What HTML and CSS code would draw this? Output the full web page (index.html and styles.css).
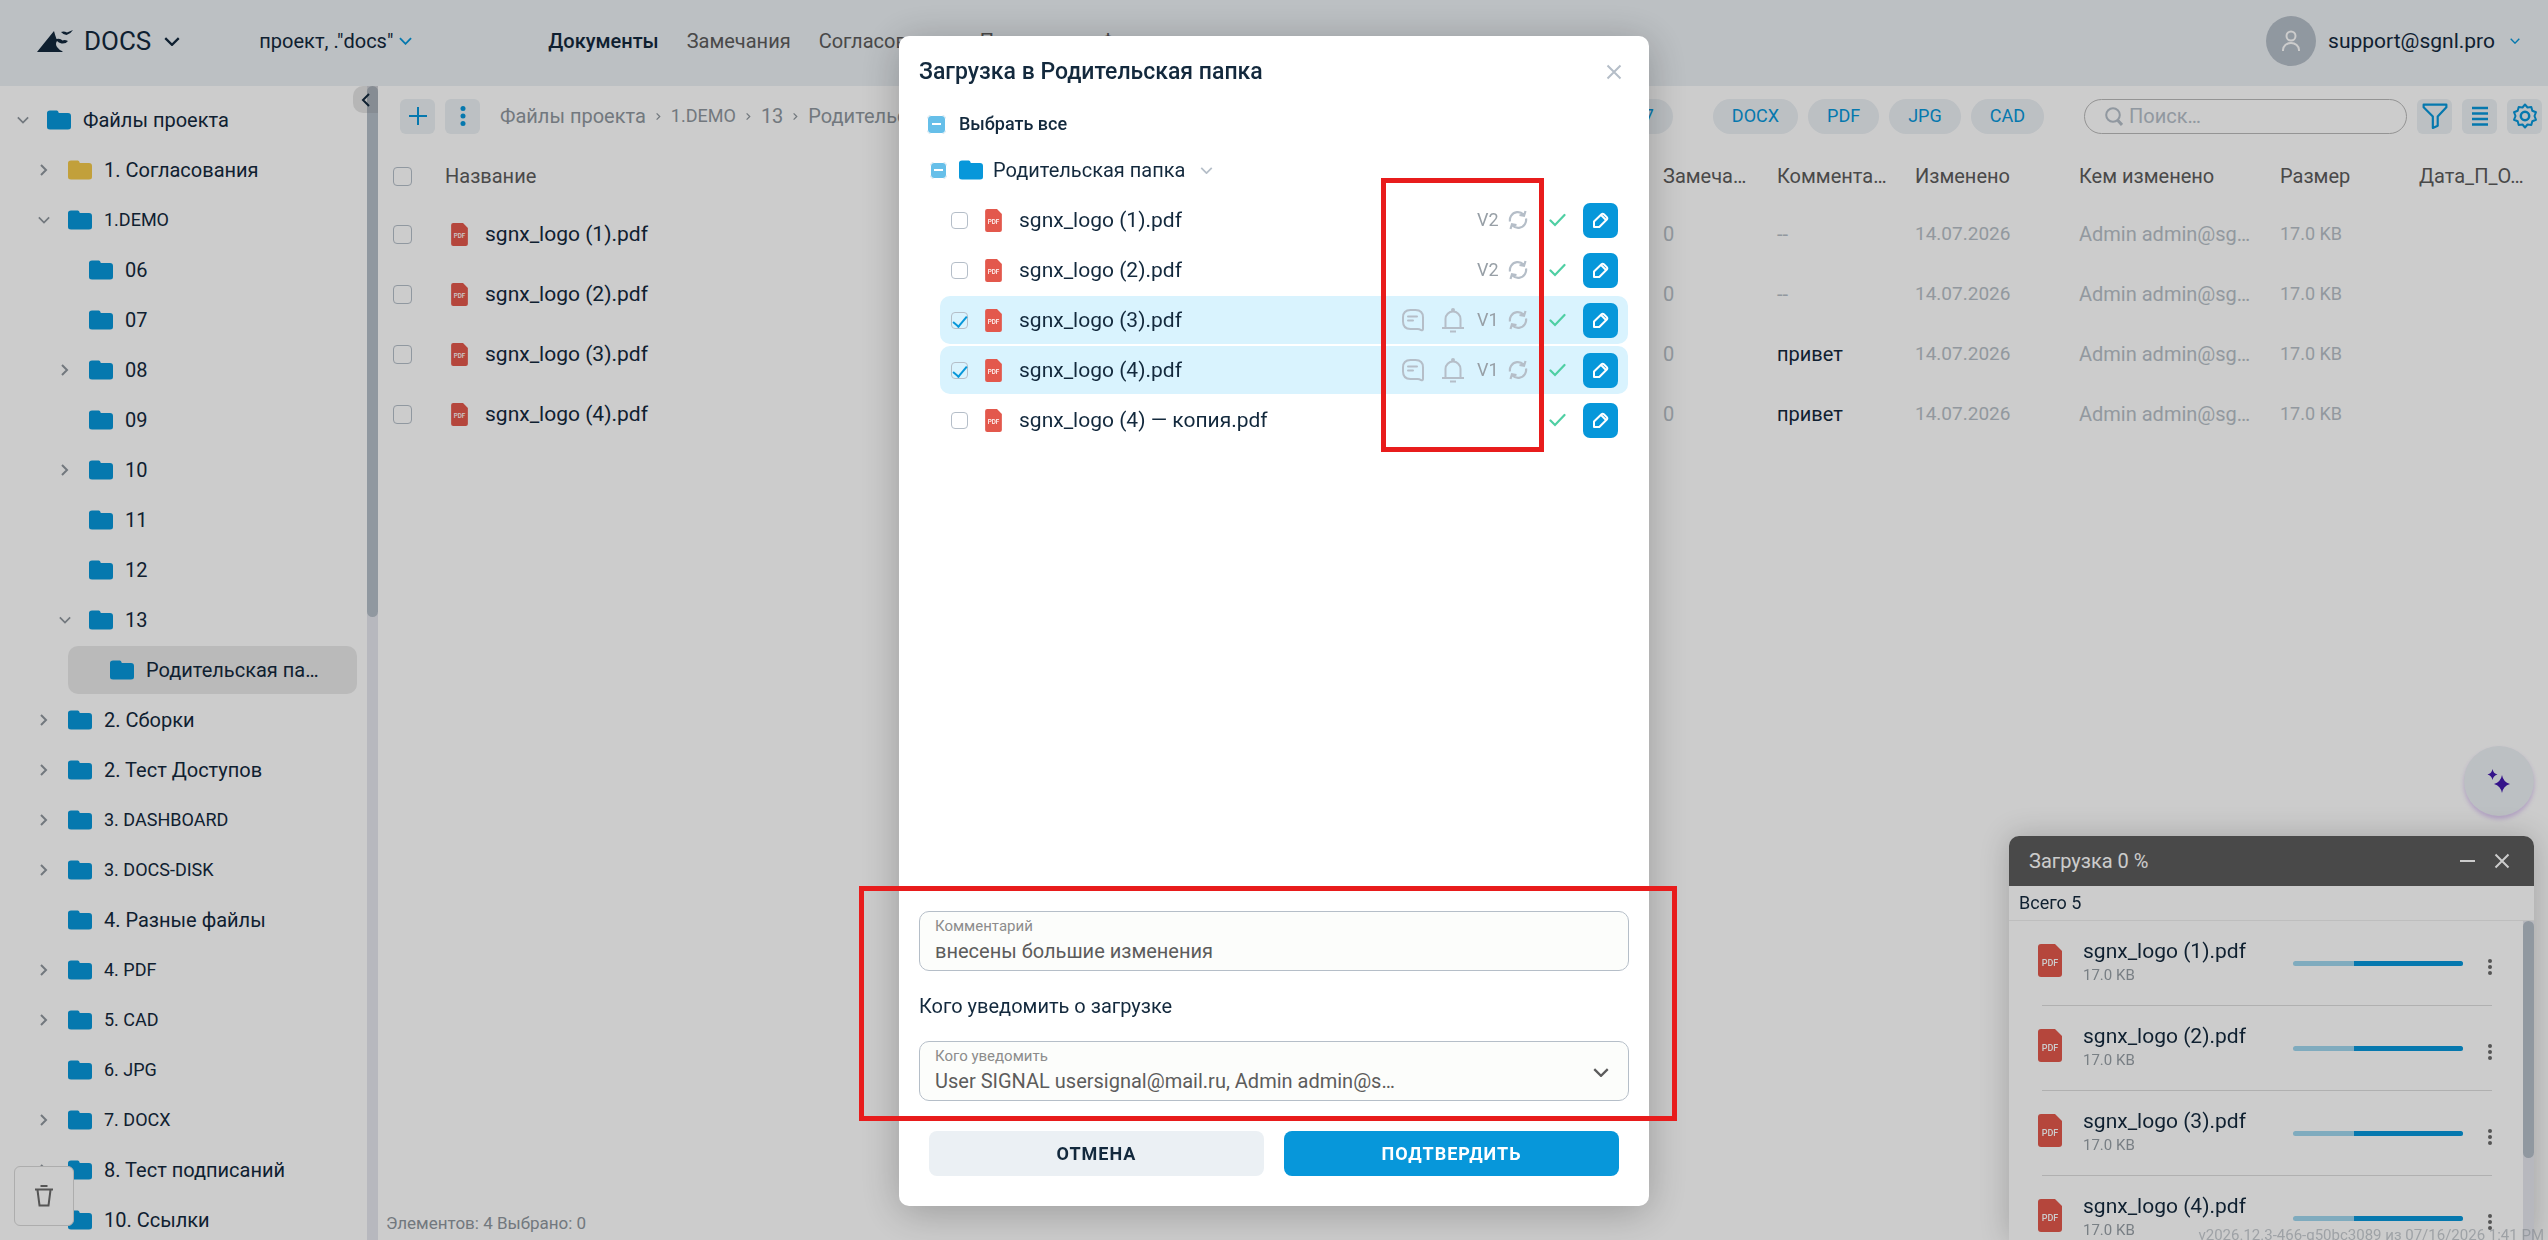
FILE: index.html
```html
<!DOCTYPE html>
<html lang="ru">
<head>
<meta charset="utf-8">
<title>DOCS</title>
<link rel="stylesheet" href="styles.css">
</head>
<body>
<svg class="sprite" aria-hidden="true">
  <symbol id="down" viewBox="0 0 14 8"><path d="M1 1l6 6 6-6" fill="none" stroke="currentColor" stroke-width="2"/></symbol>
  <symbol id="right" viewBox="0 0 8 14"><path d="M1 2l5 5-5 5" fill="none" stroke="currentColor" stroke-width="2"/></symbol>
  <symbol id="folder" viewBox="0 0 24 20"><path d="M3 .5h7q1.200 0 1.800 2.500H21q3 0 3 3V17q0 2.500-3 2.500H3q-3 0-3-2.500V3Q0 .5 3 .5z" fill="currentColor"/></symbol>
  <symbol id="pdf" viewBox="0 0 24 33"><path d="M3 0h14l7 7v23q0 3-3 3H3q-3 0-3-3V3q0-3 3-3z" fill="#e3584c"/><text x="12" y="22" text-anchor="middle" class="pdf-text">PDF</text></symbol>
  <symbol id="dots" viewBox="0 0 6 20"><circle cx="3" cy="2.500" r="2.500"/><circle cx="3" cy="10" r="2.500"/><circle cx="3" cy="17.500" r="2.500"/></symbol>
  <symbol id="close" viewBox="0 0 16 16"><path d="M1.500 1.500l13 13m0-13l-13 13" fill="none" stroke="currentColor" stroke-width="2"/></symbol>
  <symbol id="note" viewBox="0 0 24 24"><path d="M9.500 2h5Q22 2 22 9.500V21q0 1.800-2 1l-1.500-.7q-.8-.3-2-.3h-7Q2 21 2 13.500v-4Q2 2 9.500 2z" fill="none" stroke="currentColor" stroke-width="2"/><path d="M7 8.500h9M7 12.500h5" stroke="currentColor" stroke-width="2" stroke-linecap="round"/></symbol>
  <symbol id="bell" viewBox="0 0 24 26"><path d="M1 21h22M4.500 21v-9a7.500 7.500 0 0 1 15 0v9M9 24.500h6" fill="none" stroke="currentColor" stroke-width="2"/><circle cx="12" cy="3" r="2" fill="currentColor"/></symbol>
  <symbol id="sync" viewBox="0 0 20 20"><path d="M2 11.500a8 8 0 0 1 1-5.500 8 8 0 0 1 12.500-1.500M18 8.500a8 8 0 0 1-1 5.500 8 8 0 0 1-12.500 1.500M17.500 1l-1.500 4.800-4.500-.8M2.500 19L4 14.200l4.500.8" fill="none" stroke="currentColor" stroke-width="2.200"/></symbol>
  <symbol id="ok" viewBox="0 0 17 14"><path d="M1.500 7.500l4.500 4.500L15.500 2" fill="none" stroke="currentColor" stroke-width="2.200" stroke-linecap="round"/></symbol>
  <symbol id="pen" viewBox="0 0 17 17"><path d="M2 15V9.500L9.500 2.200q1.200-1 2.400 0l2.900 2.900q1 1.200 0 2.400L7.300 15zM9 3l5 5" fill="none" stroke="currentColor" stroke-width="2" stroke-linejoin="round"/></symbol>
</svg>

<div class="app">
  <header class="top">
    <button class="brand"><svg class="logo" viewBox="0 0 36 22"><path d="M0 22Q8 12 17 1q1 4 2.500 8 4-1 6 1.500 2-1 5.500.5-2 3-6.500 2.500-3-1-4.500-2.500-2 3 0 6t6 4.500q-1.500.5-2.500.5zM24 2q3-1 6 .5Q33 1 36 0q-2 3.500-6.500 5Q26 4.500 24 2z" fill="currentColor"/></svg><span class="brand-name">DOCS</span><svg class="chev16"><use href="#down"/></svg></button>
    <button class="project">проект, ."docs"<svg class="chev blue"><use href="#down"/></svg></button>
    <nav class="menu">
      <a href="#" class="current">Документы</a><a href="#">Замечания</a><a href="#">Согласования</a><a href="#">Проверки</a><a href="#">Формы</a>
    </nav>
    <button class="user"><span class="avatar"><svg viewBox="0 0 20 22"><circle cx="10" cy="6" r="4.500"/><path d="M2 21v-1a8 7 0 0 1 16 0v1"/></svg></span>support@sgnl.pro<svg class="chev10 blue"><use href="#down"/></svg></button>
  </header>

  <div class="body">
    <aside class="side">
      <ul class="tree">
        <li class="l0"><a href="#"><svg class="tw down"><use href="#down"/></svg><svg class="folder"><use href="#folder"/></svg>Файлы проекта</a></li>
        <li class="l1"><a href="#"><svg class="tw"><use href="#right"/></svg><svg class="folder yellow"><use href="#folder"/></svg>1. Согласования</a></li>
        <li class="l1"><a href="#"><svg class="tw down"><use href="#down"/></svg><svg class="folder"><use href="#folder"/></svg><span class="caps">1.DEMO</span></a></li>
        <li class="l2"><a href="#"><span class="tw"></span><svg class="folder"><use href="#folder"/></svg>06</a></li>
        <li class="l2"><a href="#"><span class="tw"></span><svg class="folder"><use href="#folder"/></svg>07</a></li>
        <li class="l2"><a href="#"><svg class="tw"><use href="#right"/></svg><svg class="folder"><use href="#folder"/></svg>08</a></li>
        <li class="l2"><a href="#"><span class="tw"></span><svg class="folder"><use href="#folder"/></svg>09</a></li>
        <li class="l2"><a href="#"><svg class="tw"><use href="#right"/></svg><svg class="folder"><use href="#folder"/></svg>10</a></li>
        <li class="l2"><a href="#"><span class="tw"></span><svg class="folder"><use href="#folder"/></svg>11</a></li>
        <li class="l2"><a href="#"><span class="tw"></span><svg class="folder"><use href="#folder"/></svg>12</a></li>
        <li class="l2"><a href="#"><svg class="tw down"><use href="#down"/></svg><svg class="folder"><use href="#folder"/></svg>13</a></li>
        <li class="l3"><a href="#" class="selected"><span class="tw"></span><svg class="folder"><use href="#folder"/></svg>Родительская па…</a></li>
        <li class="l1"><a href="#"><svg class="tw"><use href="#right"/></svg><svg class="folder"><use href="#folder"/></svg>2. Сборки</a></li>
        <li class="l1"><a href="#"><svg class="tw"><use href="#right"/></svg><svg class="folder"><use href="#folder"/></svg>2. Тест Доступов</a></li>
        <li class="l1"><a href="#"><svg class="tw"><use href="#right"/></svg><svg class="folder"><use href="#folder"/></svg><span class="caps">3. DASHBOARD</span></a></li>
        <li class="l1"><a href="#"><svg class="tw"><use href="#right"/></svg><svg class="folder"><use href="#folder"/></svg><span class="caps">3. DOCS-DISK</span></a></li>
        <li class="l1"><a href="#"><span class="tw"></span><svg class="folder"><use href="#folder"/></svg>4. Разные файлы</a></li>
        <li class="l1"><a href="#"><svg class="tw"><use href="#right"/></svg><svg class="folder"><use href="#folder"/></svg><span class="caps">4. PDF</span></a></li>
        <li class="l1"><a href="#"><svg class="tw"><use href="#right"/></svg><svg class="folder"><use href="#folder"/></svg><span class="caps">5. CAD</span></a></li>
        <li class="l1"><a href="#"><span class="tw"></span><svg class="folder"><use href="#folder"/></svg><span class="caps">6. JPG</span></a></li>
        <li class="l1"><a href="#"><svg class="tw"><use href="#right"/></svg><svg class="folder"><use href="#folder"/></svg><span class="caps">7. DOCX</span></a></li>
        <li class="l1"><a href="#"><svg class="tw"><use href="#right"/></svg><svg class="folder"><use href="#folder"/></svg>8. Тест подписаний</a></li>
        <li class="l1"><a href="#"><svg class="tw"><use href="#right"/></svg><svg class="folder"><use href="#folder"/></svg>10. Ссылки</a></li>
      </ul>
      <div class="track"><div class="thumb"></div></div>
      <button class="collapse" aria-label="Свернуть"><svg viewBox="0 0 9 14"><path d="M8 1L2 7l6 6" fill="none" stroke="currentColor" stroke-width="2"/></svg></button>
      <button class="trash" aria-label="Корзина"><svg viewBox="0 0 20 22"><path d="M1 4.500h18M3.500 5l2 15.500h9l2-15.500M6.500 1h7" fill="none" stroke="currentColor" stroke-width="2"/></svg></button>
    </aside>

    <main class="main">
      <div class="tools">
        <button class="sq" aria-label="Добавить"><svg viewBox="0 0 18 18"><path d="M9 0v18M0 9h18" stroke="currentColor" stroke-width="2"/></svg></button>
        <button class="sq" aria-label="Меню"><svg><use href="#dots"/></svg></button>
        <nav class="crumbs"><a href="#">Файлы проекта</a><svg><use href="#right"/></svg><a href="#" class="caps">1.DEMO</a><svg><use href="#right"/></svg><a href="#">13</a><svg><use href="#right"/></svg><a href="#">Родительская папка</a></nav>
        <div class="chips"><button class="chip">2027</button></div>
        <div class="chips"><button class="chip">DOCX</button><button class="chip">PDF</button><button class="chip">JPG</button><button class="chip">CAD</button></div>
        <label class="search"><svg viewBox="0 0 18 19"><path d="M12.500 13l4.500 5" stroke-width="3"/><circle cx="8" cy="8" r="6.800"/></svg><input type="search" placeholder="Поиск…" aria-label="Поиск"></label>
        <div class="tool-set">
          <button class="sq" aria-label="Фильтр"><svg class="wide" viewBox="0 0 24 24"><path d="M1.500 1.500h21v2.500L14.500 12.500v8.500l-4.500 2V12.500L1.500 4z" fill="none" stroke="currentColor" stroke-width="2" stroke-linejoin="round"/></svg></button>
          <button class="sq" aria-label="Список"><svg viewBox="0 0 16 20"><path d="M0 2h16M0 7.500h16M0 13h16M0 18.500h16" stroke="currentColor" stroke-width="2.500"/></svg></button>
          <button class="sq" aria-label="Настройки"><svg class="wide" viewBox="0 0 26 26"><path d="M13 1.500l2.500 3 3.800-.6 1 3.800 3.700 1.500L22.500 13l1.500 3.800-3.700 1.500-1 3.800-3.800-.6-2.500 3-2.500-3-3.800.6-1-3.800L2 16.800 3.500 13 2 9.200l3.700-1.500 1-3.800 3.800.6z" fill="none" stroke="currentColor" stroke-width="2" stroke-linejoin="round"/><circle cx="13" cy="13" r="4.200" fill="none" stroke="currentColor" stroke-width="2.500"/></svg></button>
        </div>
      </div>
      <table class="files">
        <colgroup><col class="c0"><col><col class="c2"><col class="c3"><col class="c4"><col class="c5"><col class="c6"><col class="c7"></colgroup>
        <thead><tr><th><input type="checkbox" class="box" aria-label="Все"></th><th>Название</th><th>Замеча…</th><th>Коммента…</th><th>Изменено</th><th>Кем изменено</th><th>Размер</th><th>Дата_П_О…</th></tr></thead>
        <tbody>
          <tr><td><input type="checkbox" class="box" aria-label="Файл 1"></td><td><span class="file"><svg class="pdf"><use href="#pdf"/></svg>sgnx_logo (1).pdf</span></td><td>0</td><td>--</td><td class="date">14.07.2026</td><td>Admin admin@sg…</td><td class="caps">17.0 KB</td><td></td></tr>
          <tr><td><input type="checkbox" class="box" aria-label="Файл 2"></td><td><span class="file"><svg class="pdf"><use href="#pdf"/></svg>sgnx_logo (2).pdf</span></td><td>0</td><td>--</td><td class="date">14.07.2026</td><td>Admin admin@sg…</td><td class="caps">17.0 KB</td><td></td></tr>
          <tr><td><input type="checkbox" class="box" aria-label="Файл 3"></td><td><span class="file"><svg class="pdf"><use href="#pdf"/></svg>sgnx_logo (3).pdf</span></td><td>0</td><td class="ink">привет</td><td class="date">14.07.2026</td><td>Admin admin@sg…</td><td class="caps">17.0 KB</td><td></td></tr>
          <tr><td><input type="checkbox" class="box" aria-label="Файл 4"></td><td><span class="file"><svg class="pdf"><use href="#pdf"/></svg>sgnx_logo (4).pdf</span></td><td>0</td><td class="ink">привет</td><td class="date">14.07.2026</td><td>Admin admin@sg…</td><td class="caps">17.0 KB</td><td></td></tr>
        </tbody>
      </table>
      <p class="status">Элементов: 4 Выбрано: 0</p>
    </main>
  </div>
</div>

<button class="assist" aria-label="Помощник"><svg viewBox="0 0 22 24"><path d="M14 6q1.200 7 8 9-6.800 2-8 9-1.200-7-8-9 6.800-2 8-9zM4.500 0Q5.300 4.500 9.500 5.500 5.300 6.500 4.500 11 3.700 6.500-.5 5.500 3.700 4.500 4.500 0z" fill="#4218ad"/></svg></button>

<section class="upload">
  <header class="upload-head"><h2>Загрузка 0 %</h2><button aria-label="Свернуть"><svg viewBox="0 0 16 16"><path d="M1 8h15" stroke="currentColor" stroke-width="2"/></svg></button><button aria-label="Закрыть"><svg><use href="#close"/></svg></button></header>
  <p class="total">Всего 5</p>
  <div class="upload-body">
    <ul>
      <li><svg class="pdf-big"><use href="#pdf"/></svg><div class="up-name">sgnx_logo (1).pdf<small>17.0 KB</small></div><div class="bar"><i></i></div><button aria-label="Ещё"><svg><use href="#dots"/></svg></button></li>
      <li><svg class="pdf-big"><use href="#pdf"/></svg><div class="up-name">sgnx_logo (2).pdf<small>17.0 KB</small></div><div class="bar"><i></i></div><button aria-label="Ещё"><svg><use href="#dots"/></svg></button></li>
      <li><svg class="pdf-big"><use href="#pdf"/></svg><div class="up-name">sgnx_logo (3).pdf<small>17.0 KB</small></div><div class="bar"><i></i></div><button aria-label="Ещё"><svg><use href="#dots"/></svg></button></li>
      <li><svg class="pdf-big"><use href="#pdf"/></svg><div class="up-name">sgnx_logo (4).pdf<small>17.0 KB</small></div><div class="bar"><i></i></div><button aria-label="Ещё"><svg><use href="#dots"/></svg></button></li>
    </ul>
    <div class="up-track"><div class="up-thumb"></div></div>
  </div>
</section>
<p class="version">v2026.12.3-466-g50bc3089 из 07/16/2026 1:41 PM</p>

<div class="backdrop">
  <div class="modal" role="dialog" aria-labelledby="modal-title">
    <header class="modal-head"><h1 id="modal-title">Загрузка в Родительская папка</h1><button aria-label="Закрыть"><svg><use href="#close"/></svg></button></header>
    <label class="all"><input type="checkbox" class="box partial">Выбрать все</label>
    <div class="group">
      <label><input type="checkbox" class="box small partial"><svg class="folder"><use href="#folder"/></svg>Родительская папка</label>
      <svg class="chev13"><use href="#down"/></svg>
    </div>
    <div class="picks">
      <div class="pick"><label><input type="checkbox" class="box small"><svg class="pdf"><use href="#pdf"/></svg>sgnx_logo (1).pdf</label><span class="ver">V2</span><svg class="sync"><use href="#sync"/></svg><svg class="ok"><use href="#ok"/></svg><button aria-label="Изменить"><svg><use href="#pen"/></svg></button></div>
      <div class="pick"><label><input type="checkbox" class="box small"><svg class="pdf"><use href="#pdf"/></svg>sgnx_logo (2).pdf</label><span class="ver">V2</span><svg class="sync"><use href="#sync"/></svg><svg class="ok"><use href="#ok"/></svg><button aria-label="Изменить"><svg><use href="#pen"/></svg></button></div>
      <div class="pick on"><label><input type="checkbox" class="box small" checked><svg class="pdf"><use href="#pdf"/></svg>sgnx_logo (3).pdf</label><svg class="note"><use href="#note"/></svg><svg class="bell"><use href="#bell"/></svg><span class="ver">V1</span><svg class="sync"><use href="#sync"/></svg><svg class="ok"><use href="#ok"/></svg><button aria-label="Изменить"><svg><use href="#pen"/></svg></button></div>
      <div class="pick on"><label><input type="checkbox" class="box small" checked><svg class="pdf"><use href="#pdf"/></svg>sgnx_logo (4).pdf</label><svg class="note"><use href="#note"/></svg><svg class="bell"><use href="#bell"/></svg><span class="ver">V1</span><svg class="sync"><use href="#sync"/></svg><svg class="ok"><use href="#ok"/></svg><button aria-label="Изменить"><svg><use href="#pen"/></svg></button></div>
      <div class="pick"><label><input type="checkbox" class="box small"><svg class="pdf"><use href="#pdf"/></svg>sgnx_logo (4) — копия.pdf</label><svg class="ok"><use href="#ok"/></svg><button aria-label="Изменить"><svg><use href="#pen"/></svg></button></div>
      <div class="mark mark-list"></div>
    </div>
    <div class="form">
      <div class="field"><label for="comment">Комментарий</label><input id="comment" type="text" value="внесены большие изменения"></div>
      <h2>Кого уведомить о загрузке</h2>
      <div class="field"><label for="notify">Кого уведомить</label><select id="notify"><option>User SIGNAL usersignal@mail.ru, Admin admin@s…</option></select><svg class="chev16"><use href="#down"/></svg></div>
      <div class="mark mark-form"></div>
    </div>
    <footer class="actions"><button class="cancel">ОТМЕНА</button><button class="confirm">ПОДТВЕРДИТЬ</button></footer>
  </div>
</div>
</body>
</html>
```
FILE: styles.css
```css
* { box-sizing: border-box; }
:root {
  --ink: #13293d;
  --blue: #0797da;
  --pale: #ebf0f4;
  --grey: #b5bec8;
}
body {
  margin: 0;
  height: 100vh;
  overflow: hidden;
  background: #fff;
  color: var(--ink);
  font: 20px/24px "Roboto", sans-serif;
}
h1, h2, p, ul { margin: 0; padding: 0; }
ul { list-style: none; }
a { color: inherit; text-decoration: none; }
button { margin: 0; padding: 0; border: 0; background: none; color: inherit; font: inherit; }
svg { display: block; flex: none; }
.sprite { position: absolute; width: 0; height: 0; }
.caps { font-size: 18px; }
.blue { color: var(--blue); }
.pdf-text { font: 500 9px "Roboto", sans-serif; fill: #fff; }
.folder { width: 24px; height: 20px; color: var(--blue); }
.yellow { color: #f3c94a; }
.pdf { width: 17px; height: 23px; }
.chev { width: 13px; height: 8px; }
.chev16 { width: 16px; height: 9px; }
.chev13 { width: 13px; height: 7px; color: var(--grey); }
.chev10 { width: 10px; height: 6px; margin-left: 3px; }

.box {
  appearance: none;
  flex: none;
  display: grid;
  place-items: center;
  width: 19px;
  height: 19px;
  margin: 0;
  border: 1px solid var(--grey);
  border-radius: 4px;
}
.box.small { width: 17px; height: 17px; }
.partial::after {
  content: "";
  width: 100%;
  height: 100%;
  border: 1px solid #fff;
  border-radius: 4px;
  background: linear-gradient(#fff, #fff) center / 9px 2px no-repeat #66bfe9;
}
.box:checked::after {
  content: "";
  width: 6px;
  height: 12px;
  margin-bottom: 5px;
  border: solid var(--blue);
  border-width: 0 2px 2px 0;
  transform: rotate(40deg);
}

.app { display: flex; flex-direction: column; height: 100%; }
.top {
  flex: none;
  display: flex;
  align-items: center;
  height: 86px;
  padding: 0 28px 4px 37px;
  background: var(--pale);
}
.brand { display: flex; align-items: center; color: var(--ink); }
.logo { width: 36px; height: 22px; }
.brand-name { margin: 0 13px 0 11px; font-size: 26px; line-height: 32px; }
.project { display: flex; align-items: center; gap: 6px; margin-left: 79px; }
.menu { flex: 1; display: flex; gap: 28px; margin-left: 136px; color: #5c5c5c; }
.menu .current { color: var(--ink); font-weight: 500; }
.user { display: flex; align-items: center; gap: 12px; font-size: 21px; }
.avatar { display: grid; place-items: center; width: 50px; height: 50px; border-radius: 50%; background: var(--grey); }
.avatar svg { width: 20px; height: 22px; fill: none; stroke: #fff; stroke-width: 2; }

.body { flex: 1; display: flex; min-height: 0; }
.side { position: relative; flex: none; display: flex; width: 378px; overflow: hidden; }
.tree { flex: 1; padding: 10px 10px 0 5px; }
.tree li { margin-bottom: 2px; }
.tree a { display: flex; align-items: center; height: 48px; border-radius: 10px; }
.tree .folder { margin: 0 12px 0 6px; }
.tree .selected { background: #e9e9e9; }
.tw { flex: none; width: 8px; height: 14px; margin: 0 14px; color: #8f979e; }
.tw.down { width: 12px; height: 8px; margin: 0 12px; }
.l1 { margin-left: 21px; }
.l2 { margin-left: 42px; }
.l3 { margin-left: 63px; }
.track { width: 11px; background: #e5e7ee; }
.thumb { height: 46%; border-radius: 6px; background: var(--grey); }
.collapse {
  position: absolute;
  top: 0;
  right: 0;
  width: 25px;
  height: 27px;
  padding-left: 8px;
  border-radius: 10px 0 0 10px;
  background: rgba(120, 120, 120, .2);
}
.collapse svg { width: 9px; height: 14px; }
.trash {
  position: absolute;
  left: 14px;
  bottom: 14px;
  display: grid;
  place-items: center;
  width: 60px;
  height: 60px;
  border: 1px solid #d9d9d9;
  border-radius: 6px;
  background: #fff;
  color: #6b6b6b;
}
.trash svg { width: 20px; height: 22px; }

.main { flex: 1; display: flex; flex-direction: column; min-width: 0; }
.tools { display: flex; align-items: center; gap: 10px; height: 60px; padding: 0 6px 0 22px; }
.sq { flex: none; display: grid; place-items: center; width: 35px; height: 35px; border-radius: 6px; background: var(--pale); color: var(--blue); }
.sq svg { width: 18px; height: 20px; fill: currentColor; }
.sq svg.wide { width: 26px; height: 26px; }
.crumbs { flex: 1; display: flex; align-items: center; gap: 10px; min-width: 0; margin-left: 10px; overflow: hidden; color: #8f979e; white-space: nowrap; }
.crumbs svg { width: 5px; height: 9px; }
.chips { display: flex; gap: 10px; margin-right: 30px; }
.chip { height: 35px; padding: 0 19px; border-radius: 18px; background: var(--pale); color: var(--blue); font-size: 18px; }
.search { display: flex; align-items: center; gap: 6px; width: 323px; height: 35px; padding: 0 20px; border: 1px solid #b9b9b9; border-radius: 18px; }
.search svg { width: 18px; height: 19px; fill: none; stroke: var(--grey); stroke-width: 2; }
.search input { flex: 1; min-width: 0; padding: 0; border: 0; outline: 0; background: none; font: inherit; }
.search input::placeholder { color: var(--grey); }
.tool-set { display: flex; gap: 10px; }
.files { width: 100%; table-layout: fixed; border-collapse: collapse; }
.files th { height: 58px; padding: 2px 0 0; color: #5c5c5c; font-weight: 400; text-align: left; white-space: nowrap; }
.files td { height: 60px; padding: 0; color: #b7bfc7; white-space: nowrap; }
.files .box { margin-left: 15px; }
.files .date { font-size: 19px; }
.files .ink, .file { color: var(--ink); }
.file { display: flex; align-items: center; gap: 17px; padding-left: 6px; font-size: 21px; }
.c0 { width: 67px; }
.c2 { width: 114px; }
.c3 { width: 138px; }
.c4 { width: 164px; }
.c5 { width: 201px; }
.c6 { width: 139px; }
.c7 { width: 129px; }
.status { margin-top: auto; padding: 0 8px 6px; color: #8f979e; font-size: 17px; line-height: 22px; }

.assist {
  position: fixed;
  right: 14px;
  bottom: 424px;
  display: grid;
  place-items: center;
  width: 70px;
  height: 70px;
  border-radius: 50%;
  background: var(--pale);
  box-shadow: 0 3px 4px rgba(150, 80, 220, .3);
}
.assist svg { width: 22px; height: 24px; overflow: visible; }
.upload {
  position: fixed;
  right: 14px;
  bottom: 0;
  display: flex;
  flex-direction: column;
  width: 525px;
  height: 404px;
  border-radius: 10px 10px 0 0;
  overflow: hidden;
  background: #fff;
  box-shadow: 0 0 30px rgba(0, 0, 0, .2);
}
.upload-head { flex: none; display: flex; align-items: center; gap: 19px; height: 50px; padding: 0 24px 0 20px; background: #5c5c5c; color: #fff; }
.upload-head h2 { flex: 1; font-size: 20px; font-weight: 400; }
.upload-head svg { width: 16px; height: 16px; }
.total { flex: none; height: 35px; padding: 5px 10px; border-bottom: 1px solid #eee; font-size: 18px; }
.upload-body { flex: 1; display: flex; min-height: 0; overflow: hidden; }
.upload-body ul { flex: 1; padding: 0 31px 0 33px; }
.upload-body li { display: flex; align-items: center; height: 85px; border-bottom: 1px solid #dcdcdc; }
.pdf-big { width: 24px; height: 33px; margin: 0 21px 6px -4px; }
.up-name { flex: 1; font-size: 21px; }
.up-name small { display: block; color: #979fa6; font-size: 15px; }
.bar { width: 170px; height: 5px; border-radius: 3px; overflow: hidden; background: #9fd6ee; }
.bar i { display: block; width: 64%; height: 100%; margin-left: auto; background: var(--blue); }
.upload-body button { width: 6px; margin: 7px -1px 0 24px; color: #6b6b6b; }
.upload-body button svg { width: 6px; height: 16px; fill: currentColor; }
.up-track { width: 11px; background: #e5e7ee; }
.up-thumb { height: 237px; border-radius: 6px; background: var(--grey); }
.version { position: fixed; right: 4px; bottom: -6px; color: rgba(160, 168, 176, .6); font-size: 15px; line-height: 22px; }

.backdrop { position: fixed; inset: 0; display: grid; place-items: center; padding: 36px 0 34px; background: rgba(0, 0, 0, .2); }
.modal {
  position: relative;
  display: flex;
  flex-direction: column;
  width: 750px;
  height: 100%;
  padding: 0 20px 30px;
  border-radius: 10px;
  background: #fff;
  box-shadow: 0 6px 40px rgba(0, 0, 0, .25);
}
.modal-head { display: flex; align-items: center; justify-content: space-between; height: 71px; padding-right: 7px; color: var(--grey); }
.modal-head h1 { color: var(--ink); font-size: 23px; font-weight: 500; }
.modal-head svg { width: 16px; height: 16px; }
.all { display: flex; align-items: center; gap: 13px; height: 34px; padding-left: 8px; font-size: 18px; font-weight: 500; }
.group { display: flex; align-items: center; gap: 15px; height: 58px; padding-left: 11px; }
.group label { display: flex; align-items: center; gap: 10px; }
.group .folder { margin-left: 2px; }
.picks { position: relative; display: grid; gap: 2px; margin: -3px 0 0 21px; width: 688px; }
.pick { display: flex; align-items: center; height: 48px; padding: 0 10px 0 11px; border-radius: 10px; }
.pick.on { background: #d9f3fe; }
.pick label { flex: 1; display: flex; align-items: center; gap: 17px; font-size: 21px; }
.pick .note { width: 24px; height: 24px; margin-right: 16px; color: var(--grey); }
.pick .bell { width: 24px; height: 26px; margin-right: 12px; color: var(--grey); }
.ver { width: 31px; color: #979fa6; font-size: 18px; }
.sync { width: 20px; height: 20px; margin-right: 21px; color: var(--grey); }
.ok { width: 17px; height: 14px; margin-right: 17px; color: #4fcfa3; }
.pick button { display: grid; place-items: center; width: 35px; height: 35px; border-radius: 7px; background: var(--blue); color: #fff; }
.pick button svg { width: 17px; height: 17px; }
.form { position: relative; margin-top: auto; }
.form h2 { height: 70px; font-size: 20px; font-weight: 400; line-height: 70px; }
.field { position: relative; display: flex; flex-direction: column; height: 60px; padding: 5px 15px; border: 1px solid var(--grey); border-radius: 10px; background: #fcfdfb; color: #5c5c5c; }
.field label { color: #8c8c8c; font-size: 15px; line-height: 18px; }
.field input, .field select { appearance: none; width: 100%; padding: 0; border: 0; outline: 0; background: none; color: inherit; font: inherit; line-height: 32px; }
.field .chev16 { position: absolute; right: 19px; top: 26px; }
.actions { display: grid; grid-template-columns: 1fr 1fr; gap: 20px; padding: 30px 10px 0; }
.actions button { height: 45px; border-radius: 8px; font-size: 18px; font-weight: 700; letter-spacing: 1px; }
.cancel { background: var(--pale); color: var(--ink); }
.confirm { background: var(--blue); color: #fff; }
.mark { position: absolute; border: 5px solid #e81c1c; pointer-events: none; }
.mark-list { inset: -18px 84px -8px 441px; }
.mark-form { inset: -25px -48px -20px -60px; }
```
